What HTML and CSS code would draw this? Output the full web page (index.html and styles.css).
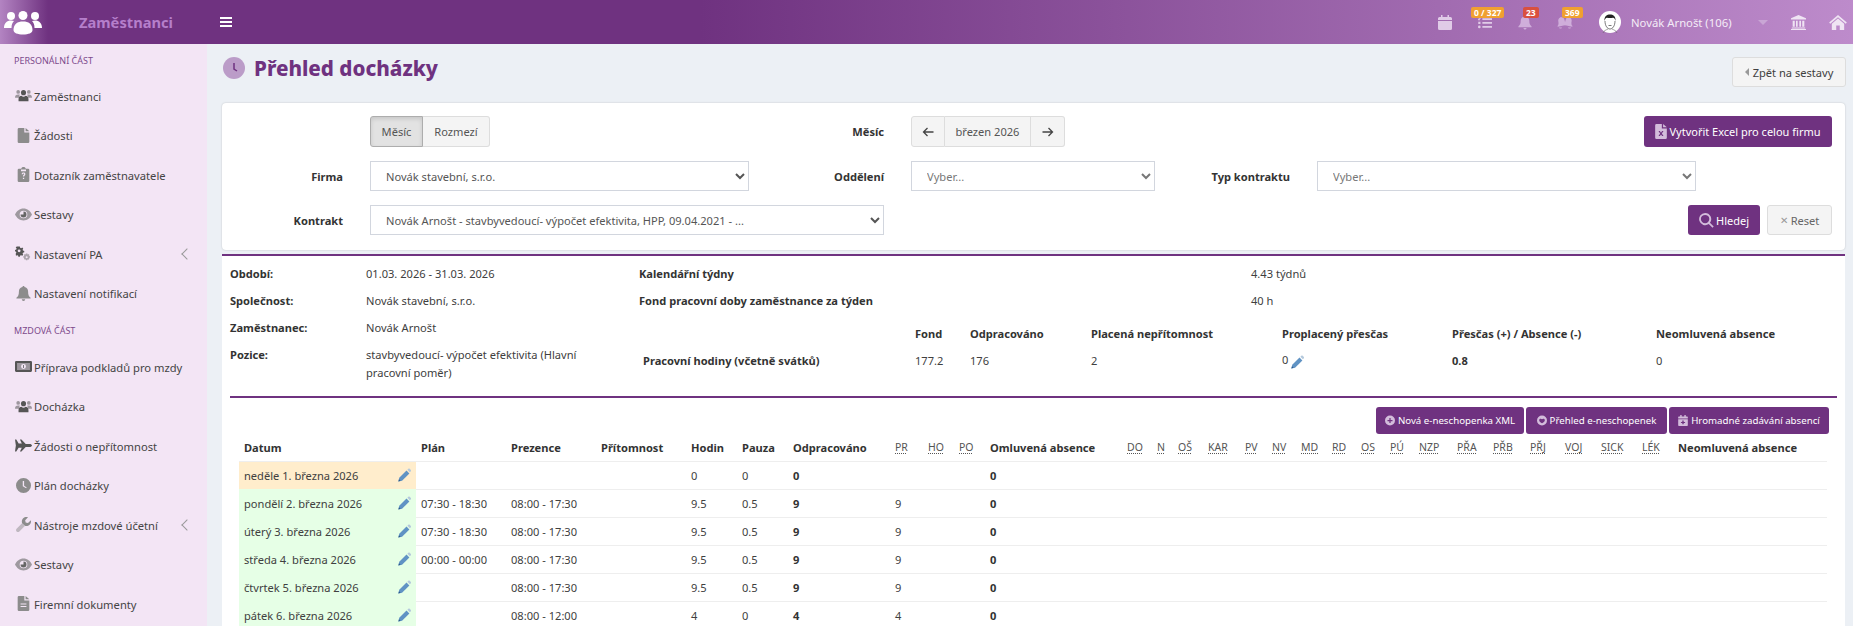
FILE: index.html
```html
<!DOCTYPE html>
<html lang="cs">
<head>
  <meta charset="UTF-8">
  <meta name="viewport" content="width=device-width, initial-scale=1.0">
  <title>Přehled docházky</title>
  <link rel="stylesheet" href="styles.css">
</head>
<body>

  <!-- icon sprite -->
  <svg class="sprite" xmlns="http://www.w3.org/2000/svg">
    <symbol id="i-users" viewBox="0 0 24 18">
      <circle cx="4.500" cy="4" r="2.600" opacity=".55"/><circle cx="19.500" cy="4" r="2.600" opacity=".55"/>
      <path d="M0 12c0-3 1.500-4.500 4.500-4.500 1 0 1.800.2 2.500.6-1 1-1.500 2.400-1.500 3.900z" opacity=".55"/>
      <path d="M24 12c0-3-1.500-4.500-4.500-4.500-1 0-1.800.2-2.500.6 1 1 1.500 2.400 1.500 3.900z" opacity=".55"/>
      <circle cx="12" cy="5" r="3.600"/>
      <path d="M5 17v-3c0-3 2-4.500 4-4.500 1 .8 2 1.200 3 1.200s2-.4 3-1.200c2 0 4 1.500 4 4.500v3z"/>
    </symbol>
    <symbol id="i-file" viewBox="0 0 14 18">
      <path d="M1.500 0H8v5.500h6V16.500a1.500 1.500 0 0 1-1.500 1.500h-11A1.500 1.500 0 0 1 0 16.500v-15A1.500 1.500 0 0 1 1.500 0zM9.500 0L14 4H9.500z"/>
    </symbol>
    <symbol id="i-file-lines" viewBox="0 0 14 18">
      <path fill-rule="evenodd" d="M1.500 0H8v5.500h6V16.500a1.500 1.500 0 0 1-1.500 1.500h-11A1.500 1.500 0 0 1 0 16.500v-15A1.500 1.500 0 0 1 1.500 0zM3.500 9v1.200h7V9zM3.500 12v1.200h7V12zM9.500 0L14 4H9.500z"/>
    </symbol>
    <symbol id="i-clipboard" viewBox="0 0 14 18">
      <path fill-rule="evenodd" d="M1.500 2H4.300C4.500.8 5.600 0 7 0s2.500.8 2.700 2h2.800A1.500 1.500 0 0 1 14 3.500v13a1.500 1.500 0 0 1-1.500 1.500h-11A1.500 1.500 0 0 1 0 16.500v-13A1.500 1.500 0 0 1 1.500 2zM4 3v2h6V3zM6.300 13v1.500h1.500V13zM4.800 8.800h1.400c0-.7.300-1 .8-1s.8.300.8.700c0 .8-1.500 1-1.500 3h1.500c0-1.300 1.500-1.500 1.500-3.100 0-1.200-.9-1.900-2.300-1.900s-2.200.8-2.200 2.300z"/>
    </symbol>
    <symbol id="i-eye" viewBox="0 0 20 14">
      <path fill-rule="evenodd" d="M10 0c4.500 0 8 3 10 7-2 4-5.500 7-10 7S2 11 0 7c2-4 5.500-7 10-7zM10 2.500a4.500 4.500 0 1 0 0 9 4.500 4.500 0 0 0 0-9z" opacity=".6"/>
      <path d="M10 3.500a3.500 3.500 0 1 1-3.500 3.500H10z"/>
    </symbol>
    <symbol id="i-cogs" viewBox="0 0 22 18">
      <path fill-rule="evenodd" d="M6.800 0l.5 1.800 1.300.5 1.600-.9 1.400 1.400-.9 1.600.5 1.300 1.800.5v2l-1.800.5-.5 1.300.9 1.600-1.400 1.400-1.600-.9-1.300.5-.5 1.800h-2l-.5-1.800-1.300-.5-1.600.9L1 10.100l.9-1.600-.5-1.300L0 6.700v-2l1.800-.5.500-1.300L1 1.300 2.400 0z M5.800 4a2 2 0 1 0 0 4 2 2 0 0 0 0-4z" transform="scale(.92)"/>
      <path fill-rule="evenodd" opacity=".45" d="M16 9l.4 1.300 1-.5 1.300 1.300-.5 1 1.300.4v1.800l-1.300.4.500 1-1.300 1.300-1-.5-.4 1.300h-1.800l-.4-1.300-1 .5-1.300-1.300.5-1-1.300-.4v-1.800l1.300-.4-.5-1 1.300-1.300 1 .5.400-1.300z M15.100 12.400a1.300 1.300 0 1 0 0 2.600 1.300 1.300 0 0 0 0-2.600z"/>
    </symbol>
    <symbol id="i-bell" viewBox="0 0 18 18">
      <path d="M9 0c.7 0 1.200.5 1.200 1.200 2.600.5 4.300 2.600 4.300 5.300 0 4.500 1 5.800 3 7.500v1H.5v-1c2-1.700 3-3 3-7.500 0-2.700 1.700-4.800 4.300-5.300C7.800.5 8.300 0 9 0zM7 16h4c0 1.100-.9 2-2 2s-2-.9-2-2z"/>
    </symbol>
    <symbol id="i-bells" viewBox="0 0 24 18">
      <path d="M8.500 2c2 .4 3.300 2 3.300 4.300 0 3.500.8 5 2.200 6v1H1v-1c1.500-1 2.300-2.500 2.300-6C3.300 4 5 2.400 7 2c.2-.6 1.300-.6 1.500 0z" transform="rotate(-12 8 8)"/>
      <path d="M17 2c2 .4 3.600 2 3.600 4.300 0 3.500.8 5 2.400 6v1H10v-1c1.500-1 2.400-2.500 2.400-6C12.400 4 13.700 2.400 15.500 2c.2-.6 1.300-.6 1.500 0z" transform="rotate(12 16 8)"/>
      <path d="M4 15.500h4c0 1-1 1.500-2 1.500s-2-.5-2-1.500zM16 15.500h4c0 1-1 1.500-2 1.500s-2-.5-2-1.500z"/>
    </symbol>
    <symbol id="i-money" viewBox="0 0 22 14">
      <path fill-rule="evenodd" d="M1.500 0h19A1.500 1.500 0 0 1 22 1.500v11a1.500 1.500 0 0 1-1.500 1.500h-19A1.500 1.500 0 0 1 0 12.500v-11A1.500 1.500 0 0 1 1.500 0zM3 2.500v9h16v-9z"/>
      <path opacity=".55" d="M3 2.500h16v9H3z"/>
      <circle cx="11" cy="7" r="3.200" fill="#f3e5f5"/>
      <path d="M10.500 5h1v4h-1z"/>
    </symbol>
    <symbol id="i-plane" viewBox="0 0 20 14">
      <path d="M0 0h1.500l2.800 4.500H8L5.800 0h1.800l5 5.200h4.500c1.500 0 2.900.8 2.900 1.800s-1.400 1.800-2.900 1.800h-4.500l-5 5.200H5.800L8 9.500H4.300L1.500 14H0l1-7z"/>
    </symbol>
    <symbol id="i-clock" viewBox="0 0 20 20">
      <path fill-rule="evenodd" d="M10 0a10 10 0 1 1 0 20 10 10 0 0 1 0-20zM9 4v7l4.500 2.700.8-1.200L10.800 10.300V4z"/>
    </symbol>
    <symbol id="i-wrench" viewBox="0 0 18 18">
      <path d="M12.500 0c.7 0 1.300.1 1.900.4L11 3.800l.6 2.800 2.800.6 3.400-3.400c.1.500.2 1 .2 1.500 0 3-2.500 5.500-5.500 5.500-.7 0-1.300-.1-1.900-.3L7.300 7.400C7.100 6.800 7 6.200 7 5.500 7 2.500 9.500 0 12.500 0z"/>
      <path opacity=".5" d="M7.300 7.400L.7 14c-.9.900-.9 2.400 0 3.300s2.400.9 3.300 0l6.600-6.600z"/>
    </symbol>
    <symbol id="i-pencil" viewBox="0 0 16 16">
      <path fill="#6093c4" d="M10.500 2.500l3.500 3.500L5 15 .5 16l1-4.500z"/>
      <path fill="#b4c9dc" d="M11.500 1.500l1-1c.6-.6 1.500-.6 2.100 0l1 1c.6.600.6 1.500 0 2.100l-1 1z"/>
      <path fill="#2c5a8c" d="M1.200 13.200l2 2-2.700.8z"/>
    </symbol>
    <symbol id="i-arrow-left" viewBox="0 0 12 10">
      <path d="M11.500 5H1.500M5.500 1L1.500 5l4 4" fill="none" stroke="currentColor" stroke-width="1.300"/>
    </symbol>
    <symbol id="i-arrow-right" viewBox="0 0 12 10">
      <path d="M.5 5h10M6.500 1l4 4-4 4" fill="none" stroke="currentColor" stroke-width="1.300"/>
    </symbol>
    <symbol id="i-search" viewBox="0 0 16 16">
      <path fill-rule="evenodd" d="M6.500 0a6.500 6.500 0 0 1 5.200 10.400l4 4-1.300 1.400-4-4A6.500 6.500 0 1 1 6.500 0zM6.500 2a4.500 4.500 0 1 0 0 9 4.500 4.500 0 0 0 0-9z"/>
    </symbol>
    <symbol id="i-plus-circle" viewBox="0 0 16 16">
      <path fill-rule="evenodd" d="M8 0a8 8 0 1 1 0 16A8 8 0 0 1 8 0zM7 4v3H4v2h3v3h2V9h3V7H9V4z"/>
    </symbol>
    <symbol id="i-heart-circle" viewBox="0 0 16 16">
      <path fill-rule="evenodd" d="M8 0a8 8 0 1 1 0 16A8 8 0 0 1 8 0zM8 6C7 4.500 3.500 4.800 3.500 7.500c0 2 2.500 3.500 4.500 5 2-1.500 4.500-3 4.500-5C12.500 4.800 9 4.500 8 6z"/>
    </symbol>
    <symbol id="i-calendar-plus" viewBox="0 0 14 16">
      <path fill-rule="evenodd" d="M3 0h2v2h4V0h2v2h2a1 1 0 0 1 1 1v12a1 1 0 0 1-1 1H1a1 1 0 0 1-1-1V3a1 1 0 0 1 1-1h2zM0 5v1h14V5zM6 8v2H4v1.500h2v2h2v-2h2V10H8V8z"/>
    </symbol>
    <symbol id="i-excel" viewBox="0 0 14 18">
      <path fill-rule="evenodd" d="M1.500 0H8v5.500h6V16.500a1.500 1.500 0 0 1-1.500 1.500h-11A1.500 1.500 0 0 1 0 16.500v-15A1.500 1.500 0 0 1 1.500 0zM4 8.500L6 11.500 4 14.500h1.700L7 12.500l1.300 2H10L8 11.500l2-3H8.300L7 10.500l-1.300-2zM9.500 0L14 4H9.500z"/>
    </symbol>
    <symbol id="i-calendar" viewBox="0 0 14 15">
      <path d="M3 0h1.500v2h5V0H11v2h1.500A1.500 1.500 0 0 1 14 3.500V5H0V3.500A1.500 1.500 0 0 1 1.500 2H3zM0 6h14v7.500a1.500 1.500 0 0 1-1.500 1.500h-11A1.500 1.500 0 0 1 0 13.500z"/>
    </symbol>
    <symbol id="i-tasks" viewBox="0 0 16 14">
      <path d="M5 2h11v2H5zM5 6.500h11v2H5zM5 11h11v2H5z"/>
      <path d="M0 2l1 1 2-3 1 .7L1.200 5 0 3.500zM.3 6.200h2.500v2.500H.3zM1.500 10.500a1.500 1.500 0 1 1 0 3 1.500 1.500 0 0 1 0-3z"/>
    </symbol>
    <symbol id="i-bank" viewBox="0 0 18 18">
      <path d="M9 0l9 4v1.500H0V4zM2 7h2.500v7H2zM6 7h2v7H6zM10 7h2v7h-2zM13.500 7H16v7h-2.500zM1 15h16v1.200H1zM0 16.800h18V18H0z"/>
    </symbol>
    <symbol id="i-home" viewBox="0 0 20 17">
      <path d="M10 0l10 8.500-1.200 1.300L10 2.500 1.200 9.800 0 8.500zM10 4l7 5.800V17h-5v-5H8v5H3V9.800z"/>
    </symbol>
  </svg>

  <header class="topbar">
    <div class="brand">
      <svg class="brand-logo" viewBox="0 0 38 24" fill="#fff">
        <circle cx="7" cy="5" r="4"/><circle cx="19" cy="4.500" r="4.500"/><circle cx="31" cy="5" r="4"/>
        <path d="M0 17c0-5 3-7.500 7-7.500 1.200 0 2.200.2 3 .6-1.500 1.500-2.500 3.500-2.500 6.900zM38 17c0-5-3-7.500-7-7.500-1.200 0-2.200.2-3 .6 1.500 1.500 2.500 3.500 2.500 6.900z"/>
        <path d="M9.500 19c0-6 4-8.500 9.500-8.500s9.500 2.500 9.500 8.500c0 3-4 4.500-9.500 4.500S9.500 22 9.500 19z"/>
      </svg>
      <span class="brand-name">Zaměstnanci</span>
    </div>
    <div class="hamburger"><span></span><span></span><span></span></div>

    <div class="topbar-right">
      <a class="top-icon"><svg class="ti-14"><use href="#i-calendar"/></svg></a>
      <a class="top-icon"><svg class="ti-14"><use href="#i-tasks"/></svg><span class="badge badge-orange badge-tasks">0 / 327</span></a>
      <a class="top-icon top-icon-bell"><svg class="ti-14"><use href="#i-bell"/></svg><span class="badge badge-red badge-bell">23</span></a>
      <a class="top-icon top-icon-bell"><svg class="ti-18"><use href="#i-bells"/></svg><span class="badge badge-orange badge-bells">369</span></a>
      <svg class="avatar" viewBox="0 0 22 22">
        <circle cx="11" cy="11" r="11" fill="#fff"/>
        <path fill="#222" d="M5.500 10C5 5 8 3.500 11 3.500S17 5 16.500 10c-.5-2-1-3-2.500-3.300-2 .5-4 .5-6 0C6.500 7 6 8 5.500 10z"/>
        <path fill="none" stroke="#444" stroke-width=".7" d="M6 10c0 5 2.500 8 5 8s5-3 5-8M9.500 14.500h3"/>
        <path fill="none" stroke="#666" stroke-width=".6" d="M4 22c1-2.500 3-3 5-4M18 22c-1-2.500-3-3-5-4"/>
      </svg>
      <span class="user-name">Novák Arnošt (106)</span>
      <span class="user-caret"></span>
      <a class="top-icon top-icon-sm"><svg class="ti-16"><use href="#i-bank"/></svg></a>
      <a class="top-icon top-icon-sm"><svg class="ti-18"><use href="#i-home"/></svg></a>
    </div>
  </header>

  <div class="layout">
    <aside class="sidebar">
      <div class="nav-title">PERSONÁLNÍ ČÁST</div>
      <a class="nav-item"><svg class="nav-icon"><use href="#i-users"/></svg>Zaměstnanci</a>
      <a class="nav-item"><svg class="nav-icon nav-icon-file"><use href="#i-file"/></svg>Žádosti</a>
      <a class="nav-item"><svg class="nav-icon nav-icon-file"><use href="#i-clipboard"/></svg>Dotazník zaměstnavatele</a>
      <a class="nav-item"><svg class="nav-icon nav-icon-eye"><use href="#i-eye"/></svg>Sestavy</a>
      <a class="nav-item"><svg class="nav-icon"><use href="#i-cogs"/></svg>Nastavení PA<span class="nav-arrow"></span></a>
      <a class="nav-item"><svg class="nav-icon nav-icon-file"><use href="#i-bell"/></svg>Nastavení notifikací</a>
      <div class="nav-title nav-title-2">MZDOVÁ ČÁST</div>
      <a class="nav-item"><svg class="nav-icon"><use href="#i-money"/></svg>Příprava podkladů pro mzdy</a>
      <a class="nav-item"><svg class="nav-icon"><use href="#i-users"/></svg>Docházka</a>
      <a class="nav-item"><svg class="nav-icon"><use href="#i-plane"/></svg>Žádosti o nepřítomnost</a>
      <a class="nav-item"><svg class="nav-icon nav-icon-file"><use href="#i-clock"/></svg>Plán docházky</a>
      <a class="nav-item"><svg class="nav-icon nav-icon-file"><use href="#i-wrench"/></svg>Nástroje mzdové účetní<span class="nav-arrow"></span></a>
      <a class="nav-item"><svg class="nav-icon nav-icon-eye"><use href="#i-eye"/></svg>Sestavy</a>
      <a class="nav-item"><svg class="nav-icon nav-icon-file"><use href="#i-file-lines"/></svg>Firemní dokumenty</a>
    </aside>

    <main class="content">
      <div class="page-head">
        <h1 class="page-title">
          <span class="title-icon"><svg viewBox="0 0 22 22"><path d="M11 6v6l3 2" fill="none" stroke="#6f3280" stroke-width="1.500"/></svg></span>
          Přehled docházky
        </h1>
        <a class="btn-back"><span class="back-caret"></span>Zpět na sestavy</a>
      </div>

      <section class="filter-card">
        <span></span>
        <div class="btn-group">
          <a class="seg seg-active">Měsíc</a>
          <a class="seg seg-range">Rozmezí</a>
        </div>
        <label class="f-label">Měsíc</label>
        <div class="btn-group month-nav">
          <a class="seg seg-arrow"><svg class="arrow-icon"><use href="#i-arrow-left"/></svg></a>
          <a class="seg seg-month">březen 2026</a>
          <a class="seg seg-arrow"><svg class="arrow-icon"><use href="#i-arrow-right"/></svg></a>
        </div>
        <div class="f-actions f-actions-top">
          <a class="btn-primary btn-excel"><svg class="btn-icon"><use href="#i-excel"/></svg>Vytvořit Excel pro celou firmu</a>
        </div>

        <label class="f-label">Firma</label>
        <select class="f-select"><option>Novák stavební, s.r.o.</option></select>
        <label class="f-label">Oddělení</label>
        <select class="f-select f-muted"><option>Vyber...</option></select>
        <label class="f-label">Typ kontraktu</label>
        <select class="f-select f-muted"><option>Vyber...</option></select>
        <span></span>

        <label class="f-label">Kontrakt</label>
        <select class="f-select f-wide"><option>Novák Arnošt - stavbyvedoucí- výpočet efektivita, HPP, 09.04.2021 - ...</option></select>
        <div class="f-actions f-actions-bottom">
          <a class="btn-primary btn-search"><svg class="btn-icon btn-icon-search"><use href="#i-search"/></svg>Hledej</a>
          <a class="btn-reset"><span class="reset-x">&#10005;</span>Reset</a>
        </div>
      </section>

      <section class="result-card">
        <div class="info">
          <dl class="info-left">
            <dt>Období:</dt><dd>01.03. 2026 - 31.03. 2026</dd>
            <dt>Společnost:</dt><dd>Novák stavební, s.r.o.</dd>
            <dt>Zaměstnanec:</dt><dd>Novák Arnošt</dd>
            <dt>Pozice:</dt><dd>stavbyvedoucí- výpočet efektivita (Hlavní pracovní poměr)</dd>
          </dl>
          <div class="info-right">
            <dl class="info-weeks">
              <dt>Kalendářní týdny</dt><dd>4.43 týdnů</dd>
              <dt>Fond pracovní doby zaměstnance za týden</dt><dd>40 h</dd>
            </dl>
            <div class="stats">
              <span></span>
              <b>Fond</b><b>Odpracováno</b><b>Placená nepřítomnost</b><b>Proplacený přesčas</b><b>Přesčas (+) / Absence (-)</b><b>Neomluvená absence</b>
              <b class="stats-name">Pracovní hodiny (včetně svátků)</b>
              <span>177.2</span><span>176</span><span>2</span>
              <span>0 <svg class="pencil"><use href="#i-pencil"/></svg></span>
              <b>0.8</b><span>0</span>
            </div>
          </div>
        </div>

        <hr class="divider">

        <div class="table-actions">
          <a class="btn-primary btn-sm btn-xml"><svg class="btn-icon-sm"><use href="#i-plus-circle"/></svg>Nová e-neschopenka XML</a>
          <a class="btn-primary btn-sm btn-list"><svg class="btn-icon-sm"><use href="#i-heart-circle"/></svg>Přehled e-neschopenek</a>
          <a class="btn-primary btn-sm btn-bulk"><svg class="btn-icon-sm"><use href="#i-calendar-plus"/></svg>Hromadné zadávání absencí</a>
        </div>

        <table class="att-table">
          <colgroup>
            <col class="c-date"><col class="c-90"><col class="c-90"><col class="c-90">
            <col class="c-51"><col class="c-51"><col class="c-102">
            <col class="c-33"><col class="c-31"><col class="c-31"><col class="c-137">
            <col class="c-30"><col class="c-21"><col class="c-30"><col class="c-37"><col class="c-27">
            <col class="c-29"><col class="c-31"><col class="c-29"><col class="c-29"><col class="c-29">
            <col class="c-38"><col class="c-36"><col class="c-37"><col class="c-35"><col class="c-36">
            <col class="c-41"><col class="c-36"><col class="c-154">
          </colgroup>
          <thead>
            <tr>
              <th>Datum</th><th>Plán</th><th>Prezence</th><th>Přítomnost</th><th>Hodin</th><th>Pauza</th><th>Odpracováno</th>
              <th class="abbr"><abbr>PR</abbr></th><th class="abbr"><abbr>HO</abbr></th><th class="abbr"><abbr>PO</abbr></th>
              <th>Omluvená absence</th>
              <th class="abbr"><abbr>DO</abbr></th><th class="abbr"><abbr>N</abbr></th><th class="abbr"><abbr>OŠ</abbr></th><th class="abbr"><abbr>KAR</abbr></th><th class="abbr"><abbr>PV</abbr></th>
              <th class="abbr"><abbr>NV</abbr></th><th class="abbr"><abbr>MD</abbr></th><th class="abbr"><abbr>RD</abbr></th><th class="abbr"><abbr>OS</abbr></th><th class="abbr"><abbr>PÚ</abbr></th>
              <th class="abbr"><abbr>NZP</abbr></th><th class="abbr"><abbr>PŘA</abbr></th><th class="abbr"><abbr>PŘB</abbr></th><th class="abbr"><abbr>PŘJ</abbr></th><th class="abbr"><abbr>VOJ</abbr></th>
              <th class="abbr"><abbr>SICK</abbr></th><th class="abbr"><abbr>LÉK</abbr></th><th>Neomluvená absence</th>
            </tr>
          </thead>
          <tbody>
            <tr>
              <td class="day day-off"><div class="day-in">neděle 1. března 2026<svg class="pencil"><use href="#i-pencil"/></svg></div></td>
              <td></td><td></td><td></td><td>0</td><td>0</td><td><b>0</b></td><td></td><td></td><td></td><td><b>0</b></td><td colspan="18"></td>
            </tr>
            <tr>
              <td class="day"><div class="day-in">pondělí 2. března 2026<svg class="pencil"><use href="#i-pencil"/></svg></div></td>
              <td>07:30 - 18:30</td><td>08:00 - 17:30</td><td></td><td>9.5</td><td>0.5</td><td><b>9</b></td><td>9</td><td></td><td></td><td><b>0</b></td><td colspan="18"></td>
            </tr>
            <tr>
              <td class="day"><div class="day-in">úterý 3. března 2026<svg class="pencil"><use href="#i-pencil"/></svg></div></td>
              <td>07:30 - 18:30</td><td>08:00 - 17:30</td><td></td><td>9.5</td><td>0.5</td><td><b>9</b></td><td>9</td><td></td><td></td><td><b>0</b></td><td colspan="18"></td>
            </tr>
            <tr>
              <td class="day"><div class="day-in">středa 4. března 2026<svg class="pencil"><use href="#i-pencil"/></svg></div></td>
              <td>00:00 - 00:00</td><td>08:00 - 17:30</td><td></td><td>9.5</td><td>0.5</td><td><b>9</b></td><td>9</td><td></td><td></td><td><b>0</b></td><td colspan="18"></td>
            </tr>
            <tr>
              <td class="day"><div class="day-in">čtvrtek 5. března 2026<svg class="pencil"><use href="#i-pencil"/></svg></div></td>
              <td></td><td>08:00 - 17:30</td><td></td><td>9.5</td><td>0.5</td><td><b>9</b></td><td>9</td><td></td><td></td><td><b>0</b></td><td colspan="18"></td>
            </tr>
            <tr>
              <td class="day"><div class="day-in">pátek 6. března 2026<svg class="pencil"><use href="#i-pencil"/></svg></div></td>
              <td></td><td>08:00 - 12:00</td><td></td><td>4</td><td>0</td><td><b>4</b></td><td>4</td><td></td><td></td><td><b>0</b></td><td colspan="18"></td>
            </tr>
          </tbody>
        </table>
      </section>
    </main>
  </div>

</body>
</html>
```

FILE: styles.css
```css
/* General Reset */
* {
  margin: 0;
  padding: 0;
  box-sizing: border-box;
}

html, body {
  height: 100%;
  overflow: hidden;
}

body {
  font-family: "Noto Sans", "Liberation Sans", sans-serif;
  font-size: 11.1px;
  color: #404040;
  background-color: #ecf0f5;
}

.sprite {
  display: none;
}

a {
  color: inherit;
  text-decoration: none;
}

/* Top bar */
.topbar {
  display: flex;
  align-items: center;
  height: 44px;
  background: linear-gradient(90deg, #b384c2 0, #6f3280 48px, #6f3280 700px, #bd8bcb 1853px);
}

.brand {
  display: flex;
  align-items: center;
  width: 207px;
  flex: none;
}

.brand-logo {
  width: 38px;
  height: 24px;
  margin-left: 4px;
  margin-top: 1px;
}

.brand-name {
  margin-left: 37px;
  font-size: 14.7px;
  font-weight: 700;
  color: #b57fcb;
}

.hamburger {
  display: flex;
  flex-direction: column;
  gap: 2px;
  margin-left: 13px;
  width: 12px;
}

.hamburger span {
  height: 2px;
  background: #fff;
}

.topbar-right {
  display: flex;
  align-items: center;
  margin-left: auto;
}

.top-icon {
  position: relative;
  display: flex;
  align-items: center;
  justify-content: center;
  width: 40px;
  height: 44px;
  fill: #e0cbe7;
}

.top-icon-bell {
  fill: #cfaeda;
}

.top-icon-sm {
  width: 30px;
  margin-left: 10px;
  fill: #efe4f3;
}

.ti-14 { width: 14px; height: 15px; }
.ti-16 { width: 15px; height: 15px; }
.ti-18 { width: 18px; height: 15px; }

.badge {
  position: absolute;
  top: 7px;
  height: 11px;
  padding: 0 3px;
  border-radius: 2px;
  font-size: 8.5px;
  line-height: 11px;
  font-weight: 700;
  color: #fff;
  white-space: nowrap;
}

.badge-orange {
  background: #f0a030;
}

.badge-red {
  background: #d9503f;
}

.badge-tasks { left: 6px; }
.badge-bell { left: 18px; }
.badge-bells { left: 17px; }

.avatar {
  width: 22px;
  height: 22px;
  margin-left: 14px;
}

.user-name {
  margin-left: 10px;
  width: 102px;
  font-size: 11.3px;
  color: #f4ecf7;
  white-space: nowrap;
}

.user-caret {
  width: 0;
  height: 0;
  margin-left: 25px;
  margin-right: 5px;
  border-left: 5px solid transparent;
  border-right: 5px solid transparent;
  border-top: 5px solid #c9a6d5;
}

/* Layout */
.layout {
  display: flex;
  height: 582px;
}

.sidebar {
  width: 207px;
  flex: none;
  background-color: #f3e5f5;
  color: #444;
  font-size: 11.2px;
}

.nav-title {
  height: 32.250px;
  padding: 11px 0 0 14px;
  font-size: 9px;
  line-height: 12px;
  color: #7d4a8c;
}

.nav-title-2 {
  height: 34px;
  padding-top: 12px;
}

.nav-item {
  display: flex;
  align-items: center;
  height: 39.500px;
  padding-left: 34px;
  position: relative;
}

.nav-icon {
  position: absolute;
  left: 15px;
  top: 12px;
  width: 17px;
  height: 15px;
  fill: #555;
}

.nav-icon-file {
  fill: #8c8c8c;
}

.nav-icon-eye {
  fill: #666;
}

.nav-arrow {
  position: absolute;
  left: 183px;
  top: 16px;
  width: 8px;
  height: 8px;
  border-left: 1.500px solid #999;
  border-bottom: 1.500px solid #999;
  transform: rotate(45deg);
}

.content {
  flex: 1;
  min-width: 0;
  padding: 0 8px 0 15px;
}

/* Page head */
.page-head {
  display: flex;
  justify-content: space-between;
  height: 59px;
  padding-top: 13px;
}

.page-title {
  display: flex;
  align-items: center;
  gap: 9px;
  height: 22px;
  margin-left: 1px;
  font-size: 20.6px;
  font-weight: 800;
  color: #6f3280;
}

.title-icon {
  flex: none;
  width: 22px;
  height: 22px;
  border-radius: 50%;
  background: #bb9cc8;
}

.title-icon svg {
  display: block;
  width: 22px;
  height: 22px;
}

.btn-back {
  display: flex;
  align-items: center;
  justify-content: center;
  width: 114px;
  height: 30px;
  margin-right: -1px;
  border: 1px solid #ddd;
  border-radius: 3px;
  background: #f4f4f4;
}

.back-caret {
  width: 0;
  height: 0;
  margin-right: 4px;
  border-top: 4px solid transparent;
  border-bottom: 4px solid transparent;
  border-right: 4px solid #999;
}

/* Filter card */
.filter-card {
  display: grid;
  grid-template-columns: 148px 379px 162px 244px 162px 379px 150px;
  grid-template-rows: 31px 30px 30px;
  row-gap: 14px;
  align-items: center;
  height: 147px;
  padding-top: 13px;
  background: #fff;
  border-radius: 4px;
  box-shadow: 0 0 2px rgba(0, 0, 0, .2);
}

.f-label {
  padding-right: 27px;
  text-align: right;
  font-weight: 700;
  color: #333;
}

.btn-group {
  display: flex;
  height: 31px;
  width: max-content;
}

.seg {
  display: flex;
  align-items: center;
  justify-content: center;
  border: 1px solid #ddd;
  background: #f4f4f4;
  color: #555;
}

.seg + .seg {
  border-left: 0;
}

.seg:first-child {
  border-radius: 3px 0 0 3px;
}

.seg:last-child {
  border-radius: 0 3px 3px 0;
}

.seg-active {
  width: 53px;
  background: #e2e2e2;
  border-color: #adadad;
  box-shadow: inset 0 2px 4px rgba(0, 0, 0, .12);
}

.seg-range {
  width: 67px;
}

.seg-arrow {
  width: 34px;
}

.arrow-icon {
  width: 12px;
  height: 10px;
  color: #444;
}

.seg-month {
  width: 86px;
}

.f-select {
  height: 30px;
  width: 100%;
  padding: 0 11px;
  border: 1px solid #d2d6de;
  background: #fff;
  font: inherit;
  color: #555;
}

.f-muted {
  color: #777;
}

.f-wide {
  grid-column: span 2;
  width: calc(100% - 27px);
}

.f-actions {
  display: flex;
  justify-content: flex-end;
  padding-right: 14px;
  gap: 7px;
}

.f-actions-top {
  grid-column: 5 / 8;
}

.f-actions-bottom {
  grid-column: 4 / 8;
}

.btn-primary {
  display: inline-flex;
  align-items: center;
  justify-content: center;
  background: #6f3280;
  color: #fff;
  border-radius: 3px;
  white-space: nowrap;
}

.btn-excel {
  width: 188px;
  height: 31px;
  font-size: 11px;
}

.btn-search {
  width: 72px;
  height: 30px;
  font-size: 11px;
}

.btn-reset {
  display: flex;
  align-items: center;
  justify-content: center;
  width: 65px;
  height: 30px;
  border: 1px solid #ddd;
  border-radius: 3px;
  background: #f4f4f4;
  color: #666;
}

.reset-x {
  margin-right: 3px;
  font-size: 10px;
  color: #999;
}

.btn-icon {
  width: 12px;
  height: 15px;
  margin-right: 2px;
  fill: #d3bcdb;
}

.btn-icon-search {
  width: 15px;
}

/* Result card */
.result-card {
  height: 400px;
  margin-top: 4px;
  border-top: 2px solid #6f3280;
  background: #fff;
  overflow: hidden;
}

.info {
  display: flex;
  height: 140px;
  padding: 5px 0 0 8px;
}

.info b, .info dt {
  font-weight: 700;
  color: #333;
}

.info-left {
  display: grid;
  grid-template-columns: 136px 240px;
  grid-auto-rows: 27px;
  width: 409px;
  line-height: 18px;
  align-items: start;
}

.info-left dt, .info-left dd {
  padding-top: 4px;
}

.info-right {
  flex: 1;
}

.info-weeks {
  display: grid;
  grid-template-columns: 612px auto;
  grid-auto-rows: 27px;
  line-height: 18px;
}

.info-weeks dt, .info-weeks dd {
  padding-top: 4px;
}

.stats {
  display: grid;
  grid-template-columns: 272px 55px 121px 191px 170px 204px auto;
  grid-template-rows: 27px 27px;
  margin-top: 5px;
  margin-left: 4px;
  align-items: center;
}

.stats b {
  white-space: nowrap;
}

.divider {
  height: 2px;
  margin: 0 8px;
  border: 0;
  background: #6f3280;
}

.table-actions {
  display: flex;
  justify-content: flex-end;
  gap: 2px;
  margin-top: 9px;
  padding-right: 16px;
}

.btn-sm {
  height: 27px;
  font-size: 9.7px;
}

.btn-xml { width: 148px; }
.btn-list { width: 141px; }
.btn-bulk { width: 160px; }

.btn-icon-sm {
  width: 10px;
  height: 11px;
  margin-right: 3px;
  fill: #d3bcdb;
}

/* Attendance table */
.att-table {
  table-layout: fixed;
  border-collapse: collapse;
  width: 1588px;
  margin-left: 17px;
}

.att-table th {
  height: 27px;
  padding: 0 5px;
  text-align: left;
  font-weight: 700;
  color: #333;
  white-space: nowrap;
  border-bottom: 1px solid #eee;
}

.att-table th.abbr {
  font-weight: 400;
  font-size: 10.5px;
  color: #555;
}

abbr {
  text-decoration: underline dotted;
  text-underline-offset: 2px;
}

.att-table td {
  height: 28px;
  padding: 0 5px;
  border-bottom: 1px solid #eee;
  white-space: nowrap;
}

.att-table td b {
  color: #333;
}

.att-table td.day {
  background: #e6ffe6;
  border-bottom: 0;
}

.att-table td.day-off {
  background: #ffedcc;
}

.day-in {
  display: flex;
  justify-content: space-between;
  align-items: center;
}

.pencil {
  width: 13px;
  height: 14px;
  vertical-align: middle;
}

.c-date { width: 177px; }
.c-90 { width: 90px; }
.c-51 { width: 51px; }
.c-102 { width: 102px; }
.c-33 { width: 33px; }
.c-31 { width: 31px; }
.c-137 { width: 137px; }
.c-30 { width: 30px; }
.c-21 { width: 21px; }
.c-37 { width: 37px; }
.c-27 { width: 27px; }
.c-29 { width: 29px; }
.c-38 { width: 38px; }
.c-36 { width: 36px; }
.c-35 { width: 35px; }
.c-41 { width: 41px; }
.c-154 { width: 154px; }
```
